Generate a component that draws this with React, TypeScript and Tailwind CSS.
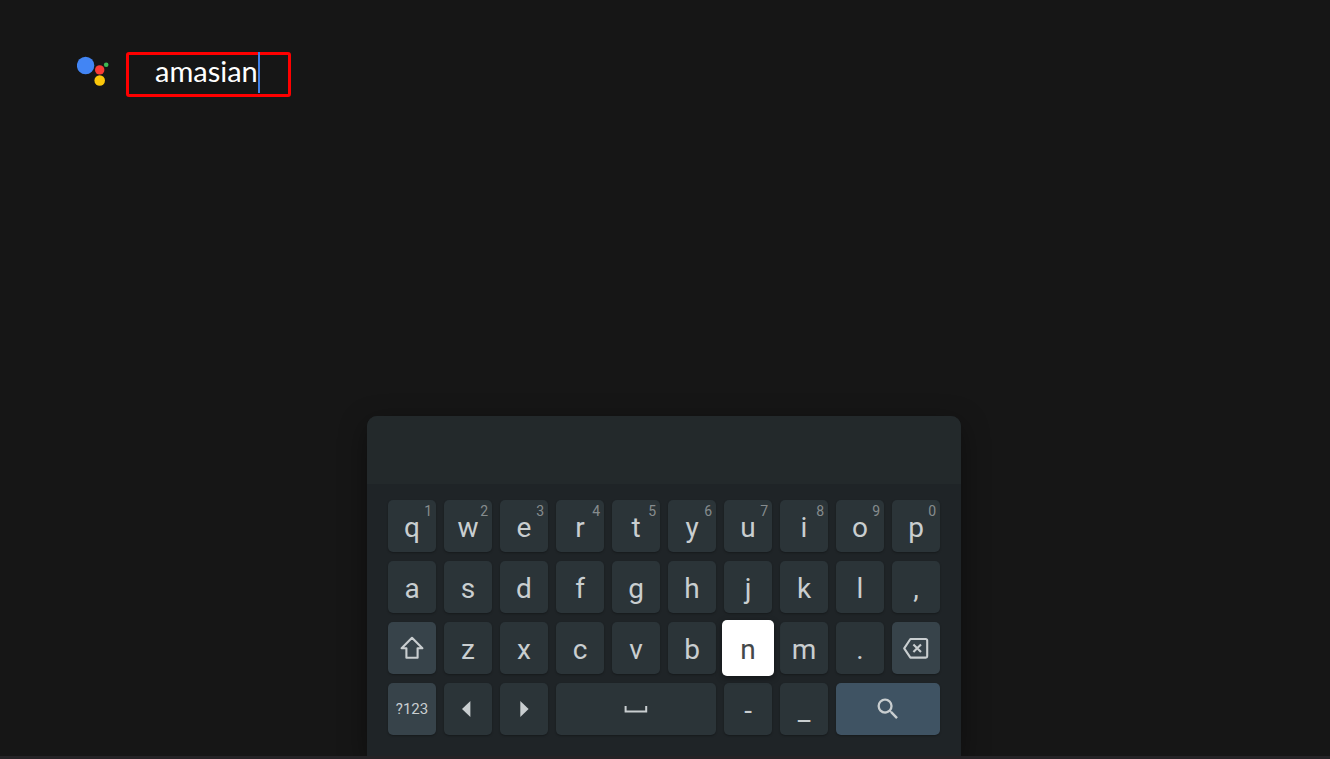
import * as React from "react";
import { MdSearch } from "react-icons/md";
import { clsx } from "clsx";

type KeyVariant = "default" | "modifier" | "action";

interface KeyDef {
  id: string;
  label?: string;
  hint?: string;
  icon?: React.ReactNode;
  variant?: KeyVariant;
  className?: string;
}

function AssistantLogo() {
  return (
    <svg width="32" height="30" viewBox="0 0 32 30" aria-hidden="true">
      <circle cx="8.6" cy="9.5" r="8.7" fill="#4285f4" />
      <circle cx="22.7" cy="13.9" r="4.7" fill="#fb3a35" />
      <circle cx="22.7" cy="24.5" r="5.3" fill="#fbc70a" />
      <circle cx="29.2" cy="8.8" r="2.3" fill="#3cba54" />
    </svg>
  );
}

function ShiftIcon() {
  return (
    <svg width="24" height="24" viewBox="0 0 24 24" fill="none" stroke="currentColor" strokeWidth="2.1" strokeLinejoin="round">
      <path d="M12 1.8 22.4 12.2h-4.8v9.6H6.4v-9.6H1.6Z" />
    </svg>
  );
}

function BackspaceIcon() {
  return (
    <svg width="28" height="24" viewBox="0 0 28 24" fill="none" stroke="currentColor" strokeWidth="2.1" strokeLinejoin="round">
      <path d="M8.4 3h15.4a1.4 1.4 0 0 1 1.4 1.4v15.8a1.4 1.4 0 0 1-1.4 1.4H8.4L2.2 12.3Z" />
      <path d="m11.4 8.5 7.6 7.6m0-7.6-7.6 7.6" />
    </svg>
  );
}

function ArrowLeftIcon() {
  return (
    <svg width="24" height="24" viewBox="0 0 24 24" fill="currentColor">
      <path d="M14.4 4v16L6 12Z" />
    </svg>
  );
}

function ArrowRightIcon() {
  return (
    <svg width="24" height="24" viewBox="0 0 24 24" fill="currentColor">
      <path d="M8.3 4v16l8.3-8Z" />
    </svg>
  );
}

function SpaceIcon() {
  return (
    <svg width="24" height="24" viewBox="0 0 24 24" fill="none" stroke="currentColor" strokeWidth="2">
      <path d="M1.6 9v5.6h20.6V9" />
    </svg>
  );
}

// Long-press digits on the top row follow the letter order
const TOP_ROW: KeyDef[] = "qwertyuiop".split("").map((letter, i) => ({
  id: letter,
  label: letter,
  hint: String((i + 1) % 10),
}));

const letters = (chars: string): KeyDef[] => chars.split("").map((char) => ({ id: char, label: char }));

const KEYS: KeyDef[] = [
  ...TOP_ROW,
  ...letters("asdfghjkl,"),
  { id: "Shift", icon: <ShiftIcon />, variant: "modifier" },
  ...letters("zxcvbnm."),
  { id: "Backspace", icon: <BackspaceIcon />, variant: "modifier" },
  { id: "Symbols", label: "?123", variant: "modifier", className: "text-[15px]" },
  { id: "Move cursor left", icon: <ArrowLeftIcon /> },
  { id: "Move cursor right", icon: <ArrowRightIcon /> },
  { id: "Space", icon: <SpaceIcon />, className: "col-span-3" },
  ...letters("-_"),
  { id: "Search", icon: <MdSearch size={28} />, variant: "action", className: "col-span-2" },
];

const VARIANT_STYLES: Record<KeyVariant, string> = {
  default: "bg-[#2b3438] text-[#c9ced0]",
  modifier: "bg-[#37434a] text-[#c9ced0]",
  action: "bg-[#3f5363] text-[#c9ced0]",
};

interface KeyProps {
  def: KeyDef;
  focused: boolean;
  onPress: (def: KeyDef) => void;
}

function Key({ def, focused, onPress }: KeyProps) {
  const { id, label, hint, icon, variant = "default", className } = def;

  return (
    <button
      type="button"
      aria-label={id}
      onClick={() => onPress(def)}
      className={clsx(
        "relative flex items-center justify-center rounded-[5px]",
        label?.length === 1 && "pt-1 text-[28px]",
        focused
          ? "z-10 -m-0.5 bg-white text-[#444849] shadow-[0_2px_6px_rgba(0,0,0,0.45)]"
          : clsx(VARIANT_STYLES[variant], "shadow-[0_1px_2px_rgba(0,0,0,0.3)]"),
        className
      )}
    >
      {icon ?? label}
      {hint && <span className="absolute top-0.5 right-1 text-sm leading-[18px] text-[#868c8e]">{hint}</span>}
    </button>
  );
}

interface KeyboardProps {
  focusedKey: string;
  onPress: (def: KeyDef) => void;
}

function Keyboard({ focusedKey, onPress }: KeyboardProps) {
  return (
    <section
      aria-label="Keyboard"
      className="w-full max-w-[594px] rounded-t-[10px] bg-[#1f2427] shadow-[0_8px_28px_rgba(0,0,0,0.4)]"
    >
      {/* Suggestion strip */}
      <div className="h-[68px] rounded-t-[10px] bg-[#23292b]" />
      <div className="grid auto-rows-[52px] grid-cols-10 gap-x-2 gap-y-[9px] px-[21px] pt-4 pb-[21px]">
        {KEYS.map((def) => (
          <Key key={def.id} def={def} focused={def.id === focusedKey} onPress={onPress} />
        ))}
      </div>
    </section>
  );
}

export default function App() {
  const [query, setQuery] = React.useState("amasian");
  const [focusedKey, setFocusedKey] = React.useState("n");

  const handlePress = (def: KeyDef) => {
    setFocusedKey(def.id);
    if (def.id === "Backspace") setQuery((q) => q.slice(0, -1));
    else if (def.id === "Space") setQuery((q) => `${q} `);
    else if (def.label?.length === 1) setQuery((q) => q + def.label);
  };

  return (
    <div className="flex min-h-screen flex-col overflow-hidden bg-[#161616] font-['Roboto',sans-serif]">
      <header className="flex items-start px-[77px] pt-[52px]">
        <label htmlFor="search" aria-label="Search" className="pt-1">
          <AssistantLogo />
        </label>
        <div className="ml-[17px] flex h-[45px] rounded-[3px] border-3 border-[#fe0000] pr-[30px] pl-[26px]">
          <div className="relative flex items-start">
            <input
              id="search"
              type="text"
              value={query}
              onChange={(e) => setQuery(e.target.value)}
              className="field-sizing-content h-8 bg-transparent font-['Lato',sans-serif] text-[29px] leading-8 text-white caret-transparent outline-none"
            />
            <span className="absolute -top-[3px] left-full h-[41px] w-0.5 bg-[#3f7fe8]" />
          </div>
        </div>
      </header>

      <main className="mt-auto flex justify-center pt-10 pr-[18px] pl-4">
        <Keyboard focusedKey={focusedKey} onPress={handlePress} />
      </main>
      <footer className="relative h-[3px] bg-[#252326]" />
    </div>
  );
}
